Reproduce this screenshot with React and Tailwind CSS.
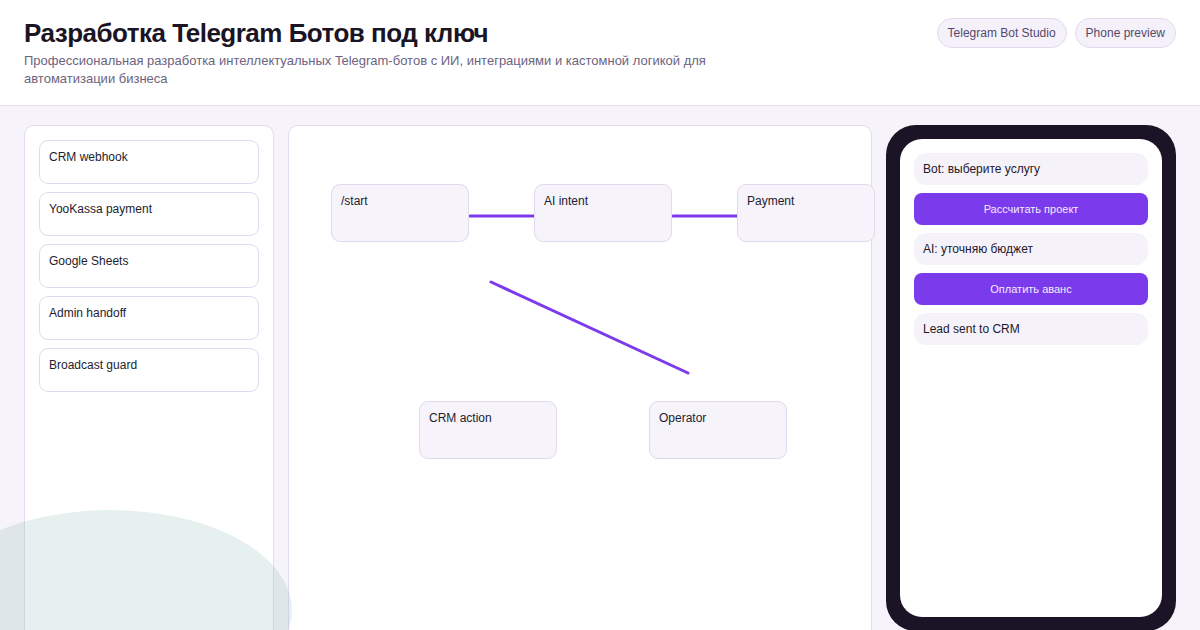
const integrations = ["CRM webhook", "YooKassa payment", "Google Sheets", "Admin handoff", "Broadcast guard"];

const nodes = [
  { label: "/start", left: 43, top: 59 },
  { label: "AI intent", left: 246, top: 59 },
  { label: "Payment", left: 449, top: 59 },
  { label: "CRM action", left: 131, top: 276 },
  { label: "Operator", left: 361, top: 276 },
];

const chat = [
  { text: "Bot: выберите услугу", action: false },
  { text: "Рассчитать проект", action: true },
  { text: "AI: уточняю бюджет", action: false },
  { text: "Оплатить аванс", action: true },
  { text: "Lead sent to CRM", action: false },
];

export default function App() {
  return (
    <div
      className="relative h-[630px] overflow-hidden bg-[#f6f3fa] text-[#1c1626]"
      style={{ fontFamily: '"Liberation Sans", Arial, sans-serif' }}
    >
      {/* Header */}
      <header className="flex h-[106px] items-start justify-between border-b border-[#e4ddef] bg-white px-6 pt-[17px] pb-[17px]">
        <div className="max-w-[720px]">
          <h1 className="text-[26px] font-bold leading-[32px] tracking-[-0.5px] text-[#1a1424]">
            Разработка Telegram Ботов под ключ
          </h1>
          <p className="mt-[3px] text-[13px] leading-[18px] text-[#6d6380]">
            Профессиональная разработка интеллектуальных Telegram-ботов с ИИ, интеграциями и кастомной логикой для
            автоматизации бизнеса
          </p>
        </div>
        <div className="mt-px flex gap-2">
          <span className="flex h-[30px] items-center rounded-full border border-[#e1d9ee] bg-[#f5f1fa] px-[10px] text-[12px] text-[#54496a]">
            Telegram Bot Studio
          </span>
          <span className="flex h-[30px] items-center rounded-full border border-[#e1d9ee] bg-[#f5f1fa] px-[10px] text-[12px] text-[#54496a]">
            Phone preview
          </span>
        </div>
      </header>

      {/* Workspace */}
      <main className="grid grid-cols-[250px_1fr_290px] gap-[14px] px-6 pt-[19px]">
        {/* Integrations list */}
        <aside className="flex h-[540px] flex-col gap-2 rounded-[10px] border border-[#e3dcef] bg-white p-[14px]">
          {integrations.map((item) => (
            <div
              key={item}
              className="h-[44px] rounded-[9px] border border-[#e1daee] bg-white px-[9px] pt-[9px] text-[12px] leading-[15px] text-[#231c2e]"
            >
              {item}
            </div>
          ))}
        </aside>

        {/* Flow canvas */}
        <section className="relative h-[540px] rounded-[10px] border border-[#e3dcef] bg-white">
          <svg className="absolute left-0 top-0" width="590" height="320" fill="none">
            <line x1="181" y1="90" x2="245" y2="90" stroke="#7c3aed" strokeWidth="3" strokeLinecap="round" />
            <line x1="384" y1="90" x2="448" y2="90" stroke="#7c3aed" strokeWidth="3" strokeLinecap="round" />
            <line x1="202" y1="156" x2="399" y2="247" stroke="#7c3aed" strokeWidth="3" strokeLinecap="round" />
          </svg>
          {nodes.map((n) => (
            <div
              key={n.label}
              className="absolute h-[58px] w-[138px] rounded-[9px] border border-[#e1d9ee] bg-[#f6f3fb] px-[9px] pt-[9px] text-[12px] leading-[15px] text-[#231c2e]"
              style={{ left: n.left - 1, top: n.top - 1 }}
            >
              {n.label}
            </div>
          ))}
        </section>

        {/* Phone preview */}
        <div className="h-[506px] rounded-[30px] bg-[#1b1426] p-[14px]">
          <div className="flex h-full flex-col gap-2 rounded-[22px] bg-white p-[14px]">
            {chat.map((m) =>
              m.action ? (
                <div
                  key={m.text}
                  className="flex h-[32px] items-center justify-center rounded-[8px] bg-[#7c3aed] text-[11px] text-[#f3edff]"
                >
                  {m.text}
                </div>
              ) : (
                <div
                  key={m.text}
                  className="flex h-[32px] items-center rounded-[12px] bg-[#f5f2fa] px-[9px] text-[12px] text-[#1f1829]"
                >
                  {m.text}
                </div>
              )
            )}
          </div>
        </div>
      </main>

      {/* Soft decorative glow in the corner */}
      <div className="pointer-events-none absolute left-[-72px] top-[510px] h-[200px] w-[364px] rounded-[50%] bg-[rgba(130,180,170,0.2)]" />
    </div>
  );
}
